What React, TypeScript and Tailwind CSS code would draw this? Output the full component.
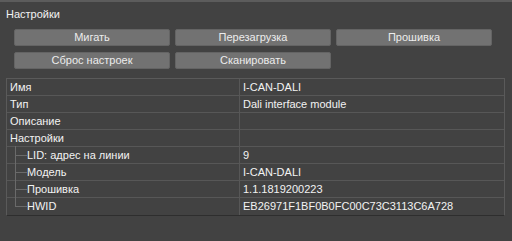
const rows: { label: string; value: string; child?: boolean; last?: boolean }[] = [
  { label: "Имя", value: "I-CAN-DALI" },
  { label: "Тип", value: "Dali interface module" },
  { label: "Описание", value: "" },
  { label: "Настройки", value: "" },
  { label: "LID: адрес на линии", value: "9", child: true },
  { label: "Модель", value: "I-CAN-DALI", child: true },
  { label: "Прошивка", value: "1.1.1819200223", child: true },
  { label: "HWID", value: "EB26971F1BF0B0FC00C73C3113C6A728", child: true, last: true },
];

function Btn({ children }: { children: React.ReactNode }) {
  return (
    <button className="w-[156px] h-[17px] rounded-[2px] border border-[#646464] bg-[#727272] text-[11px] leading-none text-[#ececec]">
      {children}
    </button>
  );
}

export default function App() {
  return (
    <div
      className="w-[512px] h-[241px] bg-[#424242] border-t-2 border-[#5c5c5c] text-[#f2f2f2] overflow-hidden"
      style={{ fontFamily: '"Liberation Sans", Arial, sans-serif' }}
    >
      <div className="pl-[6px] pt-[5px] text-[11px] leading-[14px]">Настройки</div>

      <div className="pl-[14px] pt-[8px] flex flex-col gap-[6px]">
        <div className="flex gap-[5px]">
          <Btn>Мигать</Btn>
          <Btn>Перезагрузка</Btn>
          <Btn>Прошивка</Btn>
        </div>
        <div className="flex gap-[5px]">
          <Btn>Сброс настроек</Btn>
          <Btn>Сканировать</Btn>
        </div>
      </div>

      <div className="ml-[6px] mt-[9px] w-[499px] border border-[#5a5a5a] border-b-[#2e2e2e] text-[11px]">
        {rows.map((r, i) => (
          <div
            key={i}
            className={`flex h-[17px] ${i < rows.length - 1 ? "border-b border-[#575757]" : ""}`}
          >
            <div className="relative w-[233px] border-r border-[#575757] flex items-center">
              {r.child && (
                <>
                  <div
                    className={`absolute left-[8px] top-[-1px] w-px bg-[#6a6a6a] ${r.last ? "h-[9px]" : "h-[18px]"}`}
                  />
                  <div className="absolute left-[8px] top-[8px] w-[12px] h-px bg-[#6a6a6a]" />
                </>
              )}
              <span className={r.child ? "pl-[20px]" : "pl-[3px]"}>{r.label}</span>
            </div>
            <div className="flex-1 flex items-center pl-[3px]">{r.value}</div>
          </div>
        ))}
      </div>
    </div>
  );
}
